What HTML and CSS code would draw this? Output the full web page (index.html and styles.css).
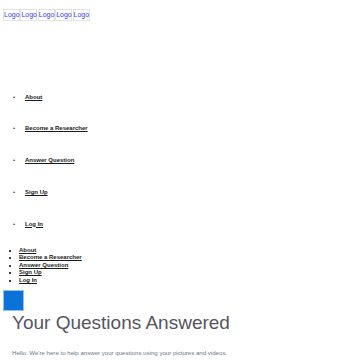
FILE: index.html
```html
<!DOCTYPE html>
<html>
    <head>
        <title>Your Questions Answered</title>
        <meta charset="utf-8"/>
        <link rel="stylesheet" href="styles.css">
    </head>
    <body>
        <div class="logos">
            <a href="#" class="logo">Logo</a>
            <a href="#" class="logo">Logo</a>
            <a href="#" class="logo">Logo</a>
            <a href="#" class="logo">Logo</a>
            <a href="#" class="logo">Logo</a>
        </div>

        <ul class="nav nav-wide">
            <li><a href="#">About</a></li>
            <li><a href="#">Become a Researcher</a></li>
            <li><a href="#">Answer Question</a></li>
            <li><a href="#">Sign Up</a></li>
            <li><a href="#">Log In</a></li>
        </ul>

        <ul class="nav nav-compact">
            <li><a href="#">About</a></li>
            <li><a href="#">Become a Researcher</a></li>
            <li><a href="#">Answer Question</a></li>
            <li><a href="#">Sign Up</a></li>
            <li><a href="#">Log In</a></li>
        </ul>

        <div class="brand"></div>

        <div class="intro">
            <h1>Your Questions Answered</h1>
            <p>Hello: We're here to help answer your questions using your pictures and videos.</p>
        </div>
    </body>
</html>
```

FILE: styles.css
```css
body {
    font-family: "Liberation Sans", Arial, sans-serif;
    margin: 0px;
    padding: 0px;
    background: #fff;
}

.logos {
    display: flex;
    padding: 9px 0px 0px 3px;
    height: 14px;
}

.logo {
    display: block;
    width: 15px;
    height: 10px;
    line-height: 10px;
    border: 1px solid #e2e2e2;
    color: #3a3af0;
    font-size: 7px;
    text-align: center;
    text-decoration: none;
    margin-right: 0.4px;
}

.nav {
    margin: 0px;
    padding: 0px;
}

.nav a {
    color: #1a1a1a;
    font-size: 6px;
    font-weight: bold;
    text-decoration: underline;
}

.nav-wide {
    list-style: none;
    margin-top: 58.5px;
    padding-left: 13px;
}

.nav-wide li {
    font-size: 6px;
    height: 31.8px;
    line-height: 31.8px;
}

.nav-wide li:before {
    content: "\2022";
    display: inline-block;
    width: 12px;
    color: #333;
}

.nav-compact {
    list-style: disc;
    margin-top: 6.5px;
    padding-left: 19px;
}

.nav-compact li {
    font-size: 6px;
    line-height: 7.5px;
}

.brand {
    width: 21px;
    height: 21px;
    margin: 6px 0px 0px 3px;
    background: #0a72d9;
    border: 1px solid #8fc2f0;
    box-sizing: border-box;
}

.intro {
    padding-left: 12px;
}

.intro h1 {
    margin: 0px;
    font-size: 19px;
    font-weight: normal;
    line-height: 24px;
    color: #555560;
}

.intro p {
    margin: 14px 0px 0px 0px;
    font-size: 6.1px;
    color: #6b7785;
}
```
